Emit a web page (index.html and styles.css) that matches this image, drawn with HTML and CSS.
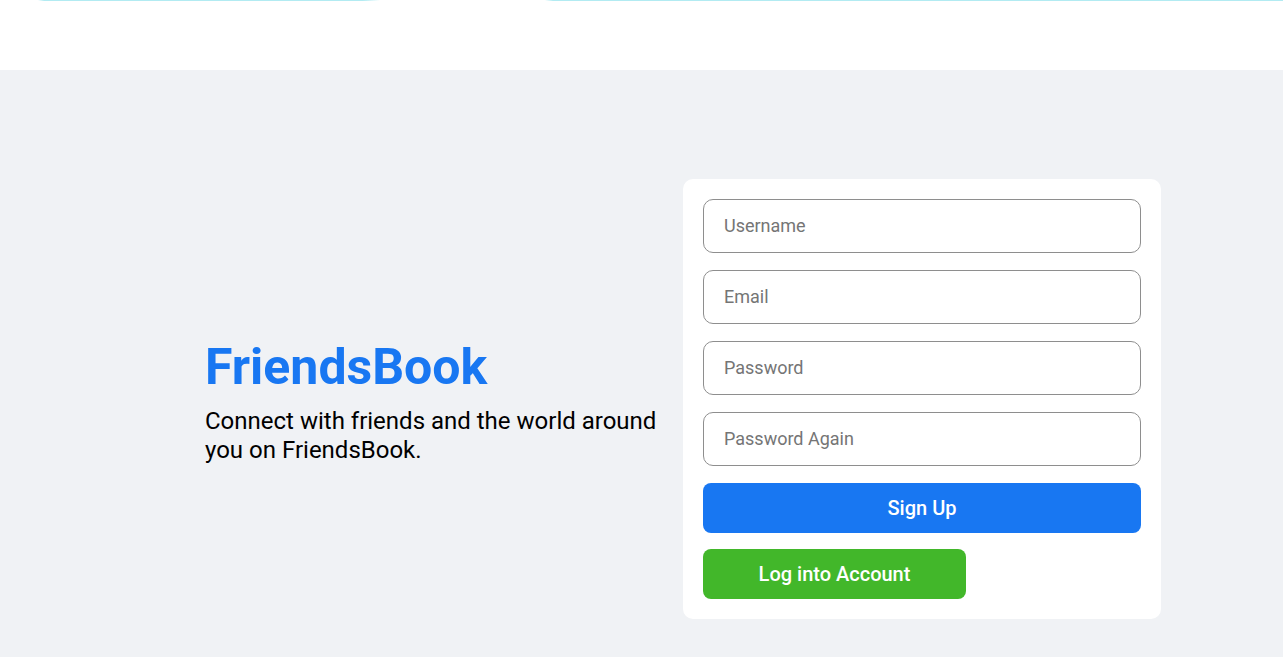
FILE: index.html
```html
<!DOCTYPE html>
<html lang="en">
<head>
<meta charset="utf-8">
<title>FriendsBook</title>
<link rel="stylesheet" href="styles.css">
</head>
<body>
<header class="topbar">
  <div class="progress">
    <span class="seg seg-a"></span>
    <span class="seg seg-b"></span>
  </div>
</header>
<main class="login">
  <div class="wrapper">
    <section class="left">
      <h1 class="logo">FriendsBook</h1>
      <p class="desc">Connect with friends and the world around you on FriendsBook.</p>
    </section>
    <section class="right">
      <form class="box">
        <input class="field" type="text" placeholder="Username">
        <input class="field" type="email" placeholder="Email">
        <input class="field" type="password" placeholder="Password">
        <input class="field" type="password" placeholder="Password Again">
        <button class="btn btn-signup" type="button">Sign Up</button>
        <button class="btn btn-login" type="button">Log into Account</button>
      </form>
    </section>
  </div>
</main>
</body>
</html>
```
FILE: styles.css
```css
* { box-sizing: border-box; }
html, body { margin: 0; padding: 0; }
body {
  font-family: Roboto, "Liberation Sans", Arial, sans-serif;
  background: #fff;
  overflow: hidden;
}
.topbar {
  height: 70px;
  background: #fff;
}
.progress {
  display: flex;
  height: 1px;
}
.seg { display: block; height: 1px; }
.seg-a {
  margin-left: 38px;
  width: 342px;
  background: linear-gradient(90deg, rgba(178,235,242,0) 0, #b2ebf2 6px, #b2ebf2 325px, rgba(178,235,242,0) 100%);
}
.seg-b {
  margin-left: 165px;
  flex: 1;
  background: linear-gradient(90deg, rgba(178,235,242,0) 0, #b2ebf2 8px, #b2ebf2 100%);
}
.login {
  height: 657px;
  background: #f0f2f5;
  display: flex;
  align-items: center;
}
.wrapper {
  margin-left: 205px;
  width: 956px;
  display: flex;
  align-items: center;
}
.left {
  width: 478px;
  margin-top: 4px;
  display: flex;
  flex-direction: column;
}
.logo {
  margin: 0 0 10px 0;
  font-size: 50px;
  font-weight: 700;
  color: #1877f2;
  line-height: 60px;
}
.desc {
  margin: 0;
  font-size: 24px;
  line-height: 29px;
  color: #000;
}
.right {
  width: 478px;
}
.box {
  height: 440px;
  background: #fff;
  border-radius: 10px;
  padding: 20px;
  display: flex;
  flex-direction: column;
}
.field {
  height: 54px;
  border: 1px solid #8e8e8e;
  border-radius: 10px;
  padding: 0 20px;
  font-family: inherit;
  font-size: 18px;
  color: #000;
  margin-bottom: 17px;
  outline: none;
}
.field::placeholder { color: #757575; }
.btn {
  height: 50px;
  border: none;
  border-radius: 8px;
  color: #fff;
  font-family: inherit;
  font-size: 20px;
  font-weight: 500;
  cursor: pointer;
}
.btn-signup {
  background: #1877f2;
}
.btn-login {
  margin-top: 16px;
  width: 263px;
  background: #42b72a;
}
```
